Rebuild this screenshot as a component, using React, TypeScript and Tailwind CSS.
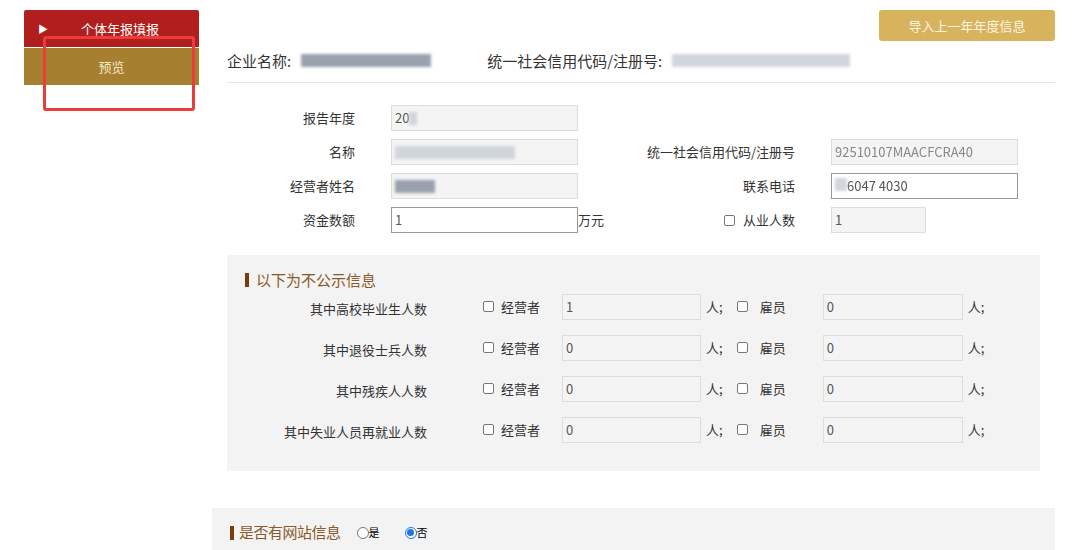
import React from 'react'

const font = { fontFamily: '"Noto Sans CJK SC", "Liberation Sans", sans-serif' }

function Blur({ w, light = false }: { w: number; light?: boolean }) {
  return (
    <span
      className={`inline-block h-[13px] blur-[1.5px] ${light ? 'bg-gray-300' : 'bg-gray-400'}`}
      style={{ width: w }}
    />
  )
}

function Box() {
  return (
    <span className="inline-block h-[11px] w-[11px] rounded-[2px] border border-[#777] bg-white" />
  )
}

function Field({
  w,
  children,
  white = false,
}: {
  w: number
  children?: React.ReactNode
  white?: boolean
}) {
  return (
    <div
      className={`flex h-[26px] shrink-0 items-center px-[3px] text-[13px] text-[#555] ${
        white ? 'border border-[#999] bg-white' : 'border border-[#ddd] bg-[#f4f4f4]'
      }`}
      style={{ width: w }}
    >
      {children}
    </div>
  )
}

const hidden = ['其中高校毕业生人数', '其中退役士兵人数', '其中残疾人人数', '其中失业人员再就业人数']

export default function App() {
  return (
    <div className="flex h-[550px] w-[1080px] overflow-hidden bg-white text-[#333]" style={font}>
      {/* Sidebar */}
      <div className="relative w-[212px] shrink-0 pt-[10px] pl-[24px]">
        <div className="flex h-[37px] w-[175px] items-center rounded-t-[2px] bg-[#b01e1e] text-[13px] text-white">
          <span className="ml-[14px] mr-[33px] text-[10px]">▶</span>
          个体年报填报
        </div>
        <div className="mt-px flex h-[37px] w-[175px] items-center justify-center bg-[#a67f30] text-[13px] text-[#f6e9c8]">
          预览
        </div>
        <div className="absolute top-[36px] left-[43px] h-[75px] w-[152px] rounded-[3px] border-[3px] border-[#ec3b3b]" />
      </div>

      {/* Main */}
      <div className="flex-1 pr-[25px]">
        <div className="flex justify-end pt-[10px]">
          <button className="h-[31px] w-[176px] rounded-[3px] bg-[#d8b35e] text-[13px] text-[#fdf5e2]">
            导入上一年年度信息
          </button>
        </div>
        <div className="ml-[15px] flex h-[42px] items-center border-b border-[#e6e6e6] text-[15px]">
          <span>企业名称:</span>
          <span className="ml-[10px]"><Blur w={130} /></span>
          <span className="ml-[56px]">统一社会信用代码/注册号:</span>
          <span className="ml-[10px]"><Blur w={178} light /></span>
        </div>

        <div className="ml-[15px] mt-[22px] grid grid-cols-[164px_187px_253px_187px] items-center gap-y-[8px] text-[13px]">
          <span className="pr-[36px] text-right">报告年度</span>
          <Field w={187}>20<Blur w={8} light /></Field>
          <span />
          <span />

          <span className="pr-[36px] text-right">名称</span>
          <Field w={187}><Blur w={120} light /></Field>
          <span className="pr-[36px] text-right">统一社会信用代码/注册号</span>
          <Field w={187}><span className="text-[#888] blur-[0.6px]">92510107MAACFCRA40</span></Field>

          <span className="pr-[36px] text-right">经营者姓名</span>
          <Field w={187}><Blur w={40} /></Field>
          <span className="pr-[36px] text-right">联系电话</span>
          <Field w={187} white><span className="blur-[0.6px]"><Blur w={12} light />6047 4030</span></Field>

          <span className="pr-[36px] text-right">资金数额</span>
          <div className="flex items-center">
            <Field w={187} white>1</Field>
            <span className="whitespace-nowrap">万元</span>
          </div>
          <span className="flex items-center justify-end gap-[8px] pr-[36px]">
            <Box />
            从业人数
          </span>
          <Field w={95}>1</Field>
        </div>

        {/* hidden info */}
        <div className="ml-[15px] mt-[22px] h-[216px] w-[813px] bg-[#f3f3f3] pt-[14px] pl-[18px]">
          <div className="flex items-center text-[15px] text-[#8a5a2b]">
            <span className="mr-[7px] inline-block h-[14px] w-[4px] bg-[#7a3d10]" />
            以下为不公示信息
          </div>
          <div className="mt-[2px] flex flex-col gap-[15px] text-[13px]">
            {hidden.map((label, i) => (
              <div key={label} className="flex items-center">
                <span className="w-[182px] pt-[4px] text-right">{label}</span>
                <span className="ml-[56px] flex items-center gap-[7px]">
                  <Box />
                  经营者
                </span>
                <span className="ml-[22px]">
                  <Field w={139}>{i === 0 ? '1' : '0'}</Field>
                </span>
                <span className="ml-[5px]">人;</span>
                <span className="ml-[14px] flex items-center gap-[12px]">
                  <Box />
                  雇员
                </span>
                <span className="ml-[37px]">
                  <Field w={140}>0</Field>
                </span>
                <span className="ml-[5px]">人;</span>
              </div>
            ))}
          </div>
        </div>

        {/* website */}
        <div className="mt-[37px] flex h-[43px] w-[843px] items-center bg-[#f3f3f3] pt-[6px] pl-[18px] text-[14px]">
          <span className="mr-[5px] inline-block h-[14px] w-[4px] bg-[#7a3d10]" />
          <span className="text-[15px] tracking-[-0.5px] text-[#8a5a2b]">是否有网站信息</span>
          <span className="ml-[16px] flex items-center text-[11px] text-black">
            <span className="inline-block h-[12px] w-[12px] rounded-full border border-[#777] bg-white" />
            是
          </span>
          <span className="ml-[25px] flex items-center text-[11px] text-black">
            <span className="flex h-[12px] w-[12px] items-center justify-center rounded-full border border-[#1a73e8] bg-white">
              <span className="h-[7px] w-[7px] rounded-full bg-[#1a73e8]" />
            </span>
            否
          </span>
        </div>
      </div>
    </div>
  )
}
